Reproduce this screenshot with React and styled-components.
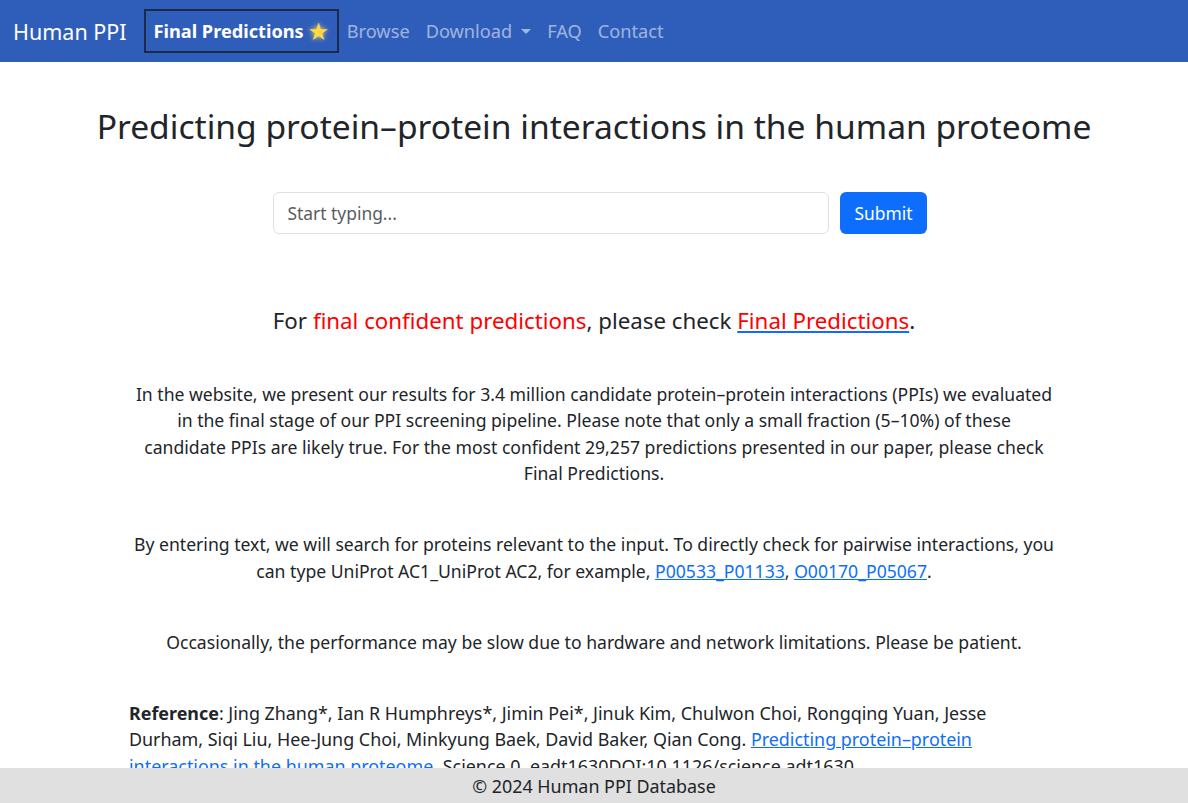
import styled, { createGlobalStyle } from "styled-components";

const GlobalStyle = createGlobalStyle`
  * { box-sizing: border-box; }
  body {
    margin: 0;
    font-family: "Noto Sans", "Open Sans", sans-serif;
    color: #212529;
    background: #fff;
  }
`;

export default function App() {
  return (
    <>
      <GlobalStyle />
      <Navbar>
        <Brand href="#">Human PPI</Brand>
        <NavList>
          <NavItem $active href="#">
            Final Predictions <Star>★</Star>
          </NavItem>
          <NavItem href="#">Browse</NavItem>
          <NavItem href="#">
            Download <Caret />
          </NavItem>
          <NavItem href="#">FAQ</NavItem>
          <NavItem href="#">Contact</NavItem>
        </NavList>
      </Navbar>

      <Header>
        <Title>Predicting protein–protein interactions in the human proteome</Title>
      </Header>

      <Main>
        <SearchForm onSubmit={e => e.preventDefault()}>
          <SearchInput placeholder="Start typing..." />
          <SubmitButton type="submit">Submit</SubmitButton>
        </SearchForm>

        <Notice>
          For <Red>final confident predictions</Red>, please check{" "}
          <RedLink href="#">Final Predictions</RedLink>.
        </Notice>

        <Paragraph>
          In the website, we present our results for 3.4 million candidate protein–protein
          interactions (PPIs) we evaluated
          <br />
          in the final stage of our PPI screening pipeline. Please note that only a small
          fraction (5–10%) of these
          <br />
          candidate PPIs are likely true. For the most confident 29,257 predictions presented in
          our paper, please check
          <br />
          Final Predictions.
        </Paragraph>

        <Paragraph>
          By entering text, we will search for proteins relevant to the input. To directly
          check for pairwise interactions, you can type UniProt AC1_UniProt AC2, for example,{" "}
          <Link href="#">P00533_P01133</Link>, <Link href="#">O00170_P05067</Link>.
        </Paragraph>

        <Paragraph>
          Occasionally, the performance may be slow due to hardware and network limitations.
          Please be patient.
        </Paragraph>

        <Reference>
          <strong>Reference</strong>: Jing Zhang*, Ian R Humphreys*, Jimin Pei*, Jinuk Kim,
          Chulwon Choi, Rongqing Yuan, Jesse
          <br />
          Durham, Siqi Liu, Hee-Jung Choi, Minkyung Baek, David Baker, Qian Cong.{" "}
          <Link href="#">
            Predicting protein–protein
            <br />
            interactions in the human proteome
          </Link>
          . Science 0, eadt1630DOI:10.1126/science.adt1630
        </Reference>
      </Main>

      <Footer>© 2024 Human PPI Database</Footer>
    </>
  );
}

const Navbar = styled.nav`
  display: flex;
  align-items: center;
  height: 62px;
  padding: 0 13px;
  background: #2f5eba;
`;

const Brand = styled.a`
  font-size: 21.5px;
  color: #fff;
  text-decoration: none;
  margin-right: 17px;
`;

const NavList = styled.div`
  display: flex;
  align-items: center;
`;

const NavItem = styled.a`
  display: flex;
  align-items: center;
  font-size: 18.2px;
  line-height: 24px;
  text-decoration: none;
  padding: ${p => (p.$active ? "8px 9px 8px 8px" : "8px 8px")};
  color: ${p => (p.$active ? "#fff" : "rgba(255, 255, 255, 0.55)")};
  font-weight: ${p => (p.$active ? 700 : 400)};
  border: ${p => (p.$active ? "2px solid #1b2a48" : "none")};
  height: ${p => (p.$active ? "44px" : "auto")};
`;

const Star = styled.span`
  font-size: 21px;
  color: #ffd83d;
  margin-left: 5px;
  text-shadow: 0 0 5px rgba(255, 230, 120, 0.9);
`;

const Caret = styled.span`
  display: inline-block;
  margin-left: 9px;
  border-top: 5px solid currentColor;
  border-left: 5px solid transparent;
  border-right: 5px solid transparent;
`;

const Header = styled.header`
  display: flex;
  justify-content: center;
  padding-top: 44px;
`;

const Title = styled.h1`
  margin: 0;
  font-size: 33.6px;
  line-height: 40px;
  font-weight: 400;
  white-space: nowrap;
  color: #212529;
`;

const Main = styled.main`
  max-width: 934px;
  margin: 0 auto;
  padding: 0 0 60px;
  text-align: center;
`;

const SearchForm = styled.form`
  display: flex;
  justify-content: center;
  gap: 11px;
  margin-top: 46px;
  padding-left: 12px;
`;

const SearchInput = styled.input`
  width: 556px;
  height: 42px;
  padding: 6px 13px;
  font-family: inherit;
  font-size: 17.4px;
  color: #212529;
  border: 1px solid #dee2e6;
  border-radius: 6px;
  outline: none;

  &::placeholder {
    color: #595c5f;
  }
`;

const SubmitButton = styled.button`
  height: 42px;
  padding: 0 14px;
  font-family: inherit;
  font-size: 17.4px;
  color: #fff;
  background: #0d6efd;
  border: none;
  border-radius: 6px;
`;

const Notice = styled.p`
  margin: 72px 0 0;
  font-size: 22.3px;
  line-height: 30px;
  color: #212529;
`;

const Red = styled.span`
  color: #ff0000;
`;

const RedLink = styled.a`
  color: #ff0000;
  text-decoration: underline;
  text-decoration-color: #0d6efd;
`;

const Paragraph = styled.p`
  margin: 44.5px 0 0;
  font-size: 17.6px;
  line-height: 26.5px;
  color: #212529;

  &:first-of-type {
    margin-top: 43px;
  }
`;

const Link = styled.a`
  color: #0d6efd;
  text-decoration: underline;
`;

const Reference = styled.p`
  margin: 44.5px 0 0;
  font-size: 17.9px;
  line-height: 26.5px;
  text-align: left;
  padding: 0 2px;

  strong {
    font-weight: 700;
  }
`;

const Footer = styled.footer`
  position: fixed;
  left: 0;
  right: 0;
  bottom: 0;
  height: 35px;
  display: flex;
  align-items: center;
  justify-content: center;
  background: #e0e0e0;
  font-size: 17.9px;
  color: #212529;
`;
